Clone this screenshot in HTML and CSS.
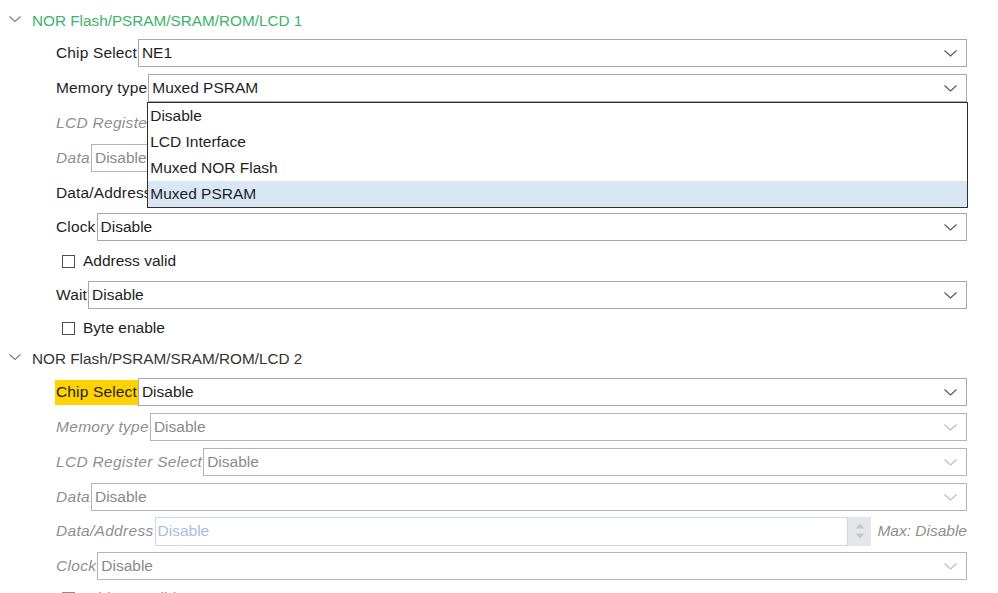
FILE: index.html
```html
<!DOCTYPE html>
<html>
<head>
<meta charset="utf-8">
<link rel="stylesheet" href="styles.css">
</head>
<body>
<div class="tree">
  <div class="group-head">
    <svg class="twisty" width="12" height="7" viewBox="0 0 12 7"><path d="M0.5 0.5 L6 5.5 L11.5 0.5" fill="none" stroke="#7a7a7a" stroke-width="1.1"/></svg>
    <span class="group-title ok">NOR Flash/PSRAM/SRAM/ROM/LCD 1</span>
  </div>

  <div class="row">
    <span class="label">Chip Select</span>
    <div class="select"><span class="value">NE1</span><svg class="caret" width="13" height="7" viewBox="0 0 13 7"><path d="M0.5 0.5 L6.5 6 L12.5 0.5" fill="none" stroke="#555" stroke-width="1.1"/></svg></div>
  </div>

  <div class="row">
    <span class="label">Memory type</span>
    <div class="select open"><span class="value">Muxed PSRAM</span><svg class="caret" width="13" height="7" viewBox="0 0 13 7"><path d="M0.5 0.5 L6.5 6 L12.5 0.5" fill="none" stroke="#555" stroke-width="1.1"/></svg>
      <ul class="menu">
        <li>Disable</li>
        <li>LCD Interface</li>
        <li>Muxed NOR Flash</li>
        <li class="sel">Muxed PSRAM</li>
      </ul>
    </div>
  </div>

  <div class="row">
    <span class="label off">LCD Register Select</span>
    <div class="select dis"><span class="value">Disable</span><svg class="caret" width="13" height="7" viewBox="0 0 13 7"><path d="M0.5 0.5 L6.5 6 L12.5 0.5" fill="none" stroke="#bbb" stroke-width="1.1"/></svg></div>
  </div>

  <div class="row">
    <span class="label off">Data</span>
    <div class="select dis"><span class="value">Disable</span><svg class="caret" width="13" height="7" viewBox="0 0 13 7"><path d="M0.5 0.5 L6.5 6 L12.5 0.5" fill="none" stroke="#bbb" stroke-width="1.1"/></svg></div>
  </div>

  <div class="row">
    <span class="label">Data/Address</span>
    <div class="select"><span class="value">Disable</span><svg class="caret" width="13" height="7" viewBox="0 0 13 7"><path d="M0.5 0.5 L6.5 6 L12.5 0.5" fill="none" stroke="#555" stroke-width="1.1"/></svg></div>
  </div>

  <div class="row">
    <span class="label">Clock</span>
    <div class="select"><span class="value">Disable</span><svg class="caret" width="13" height="7" viewBox="0 0 13 7"><path d="M0.5 0.5 L6.5 6 L12.5 0.5" fill="none" stroke="#555" stroke-width="1.1"/></svg></div>
  </div>

  <div class="check-row tall">
    <span class="box"></span><span class="check-label">Address valid</span>
  </div>

  <div class="row">
    <span class="label">Wait</span>
    <div class="select"><span class="value">Disable</span><svg class="caret" width="13" height="7" viewBox="0 0 13 7"><path d="M0.5 0.5 L6.5 6 L12.5 0.5" fill="none" stroke="#555" stroke-width="1.1"/></svg></div>
  </div>

  <div class="check-row">
    <span class="box"></span><span class="check-label">Byte enable</span>
  </div>

  <div class="group-head">
    <svg class="twisty" width="12" height="7" viewBox="0 0 12 7"><path d="M0.5 0.5 L6 5.5 L11.5 0.5" fill="none" stroke="#7a7a7a" stroke-width="1.1"/></svg>
    <span class="group-title">NOR Flash/PSRAM/SRAM/ROM/LCD 2</span>
  </div>

  <div class="row">
    <span class="label mark">Chip Select</span>
    <div class="select"><span class="value">Disable</span><svg class="caret" width="13" height="7" viewBox="0 0 13 7"><path d="M0.5 0.5 L6.5 6 L12.5 0.5" fill="none" stroke="#555" stroke-width="1.1"/></svg></div>
  </div>

  <div class="row">
    <span class="label off">Memory type</span>
    <div class="select dis"><span class="value">Disable</span><svg class="caret" width="13" height="7" viewBox="0 0 13 7"><path d="M0.5 0.5 L6.5 6 L12.5 0.5" fill="none" stroke="#bbb" stroke-width="1.1"/></svg></div>
  </div>

  <div class="row">
    <span class="label off">LCD Register Select</span>
    <div class="select dis"><span class="value">Disable</span><svg class="caret" width="13" height="7" viewBox="0 0 13 7"><path d="M0.5 0.5 L6.5 6 L12.5 0.5" fill="none" stroke="#bbb" stroke-width="1.1"/></svg></div>
  </div>

  <div class="row">
    <span class="label off">Data</span>
    <div class="select dis"><span class="value">Disable</span><svg class="caret" width="13" height="7" viewBox="0 0 13 7"><path d="M0.5 0.5 L6.5 6 L12.5 0.5" fill="none" stroke="#bbb" stroke-width="1.1"/></svg></div>
  </div>

  <div class="row">
    <span class="label off">Data/Address</span>
    <div class="spin-field"><span class="value">Disable</span></div>
    <div class="spinner">
      <svg width="10" height="6" viewBox="0 0 10 6"><path d="M5 0.5 L9.5 5.5 L0.5 5.5 Z" fill="#c2c6ca"/></svg>
      <svg width="10" height="6" viewBox="0 0 10 6"><path d="M0.5 0.5 L9.5 0.5 L5 5.5 Z" fill="#c2c6ca"/></svg>
    </div>
    <span class="max">Max: Disable</span>
  </div>

  <div class="row">
    <span class="label off">Clock</span>
    <div class="select dis"><span class="value">Disable</span><svg class="caret" width="13" height="7" viewBox="0 0 13 7"><path d="M0.5 0.5 L6.5 6 L12.5 0.5" fill="none" stroke="#bbb" stroke-width="1.1"/></svg></div>
  </div>

  <div class="check-row tall last">
    <span class="box dis"></span><span class="check-label off">Address valid</span>
  </div>
</div>
</body>
</html>
```

FILE: styles.css
```css
html, body {
  margin: 0;
  padding: 0;
  background: #ffffff;
}
body {
  width: 998px;
  height: 593px;
  overflow: hidden;
  font-family: "Liberation Sans", Arial, sans-serif;
  font-size: 15.5px;
  color: #1e1e1e;
}
.tree {
  padding-top: 5px;
}
.group-head {
  height: 31px;
  display: flex;
  align-items: center;
  padding-left: 9px;
}
.twisty {
  margin-right: 11px;
  margin-top: -3px;
}
.group-title {
  color: #333333;
  font-size: 15.3px;
}
.group-title.ok {
  color: #3bb36b;
}
.row {
  height: 34.8px;
  display: flex;
  align-items: center;
  padding-left: 56px;
  padding-right: 31px;
}
.label {
  white-space: nowrap;
  margin-right: 1px;
  color: #1e1e1e;
  letter-spacing: 0.15px;
}
.label.off {
  font-style: italic;
  color: #8f8f8f;
  letter-spacing: 0.3px;
}
.label.mark {
  background: #ffd200;
  height: 25px;
  display: flex;
  align-items: center;
  padding: 0 1px 0 1px;
  margin-left: -1px;
  margin-right: 0;
}
.select {
  position: relative;
  flex: 1;
  height: 28px;
  box-sizing: border-box;
  border: 1px solid #a8a8a8;
  display: flex;
  align-items: center;
  justify-content: space-between;
  padding: 0 9px 0 3px;
  background: #fff;
}
.select .value {
  color: #1e1e1e;
}
.select.dis .value {
  color: #8a8a8a;
}
.select.dis {
  border-color: #b4b4b4;
}
.caret {
  margin-top: 1px;
}
.menu {
  position: absolute;
  left: -2px;
  right: -2px;
  top: 27px;
  margin: 0;
  padding: 0;
  list-style: none;
  background: #fff;
  border: 1.5px solid #2f2f2f;
  z-index: 5;
}
.menu li {
  height: 26px;
  line-height: 26px;
  padding-left: 2px;
  color: #1e1e1e;
}
.menu li.sel {
  background: #d9e7f4;
}
.check-row {
  height: 31px;
  display: flex;
  align-items: center;
  padding-left: 62px;
}
.check-row.tall {
  height: 33.2px;
}
.check-row.last {
  margin-top: -2px;
}
.box {
  width: 13px;
  height: 13px;
  box-sizing: border-box;
  border: 1px solid #4d4d4d;
  background: #fff;
  margin-right: 8px;
}
.box.dis {
  border-color: #8a8a8a;
  background: #e8e8e8;
}
.check-label.off {
  color: #8f8f8f;
}
.spin-field {
  flex: 1;
  height: 29px;
  box-sizing: border-box;
  border: 1px solid #c6d8ee;
  display: flex;
  align-items: center;
  padding-left: 2px;
}
.spin-field .value {
  color: #a7bfdc;
}
.spinner {
  width: 23px;
  height: 29px;
  background: #e4e7ea;
  display: flex;
  flex-direction: column;
  align-items: center;
  justify-content: center;
  gap: 4px;
}
.max {
  margin-left: 6px;
  font-style: italic;
  color: #8f8f8f;
  white-space: nowrap;
}
```
